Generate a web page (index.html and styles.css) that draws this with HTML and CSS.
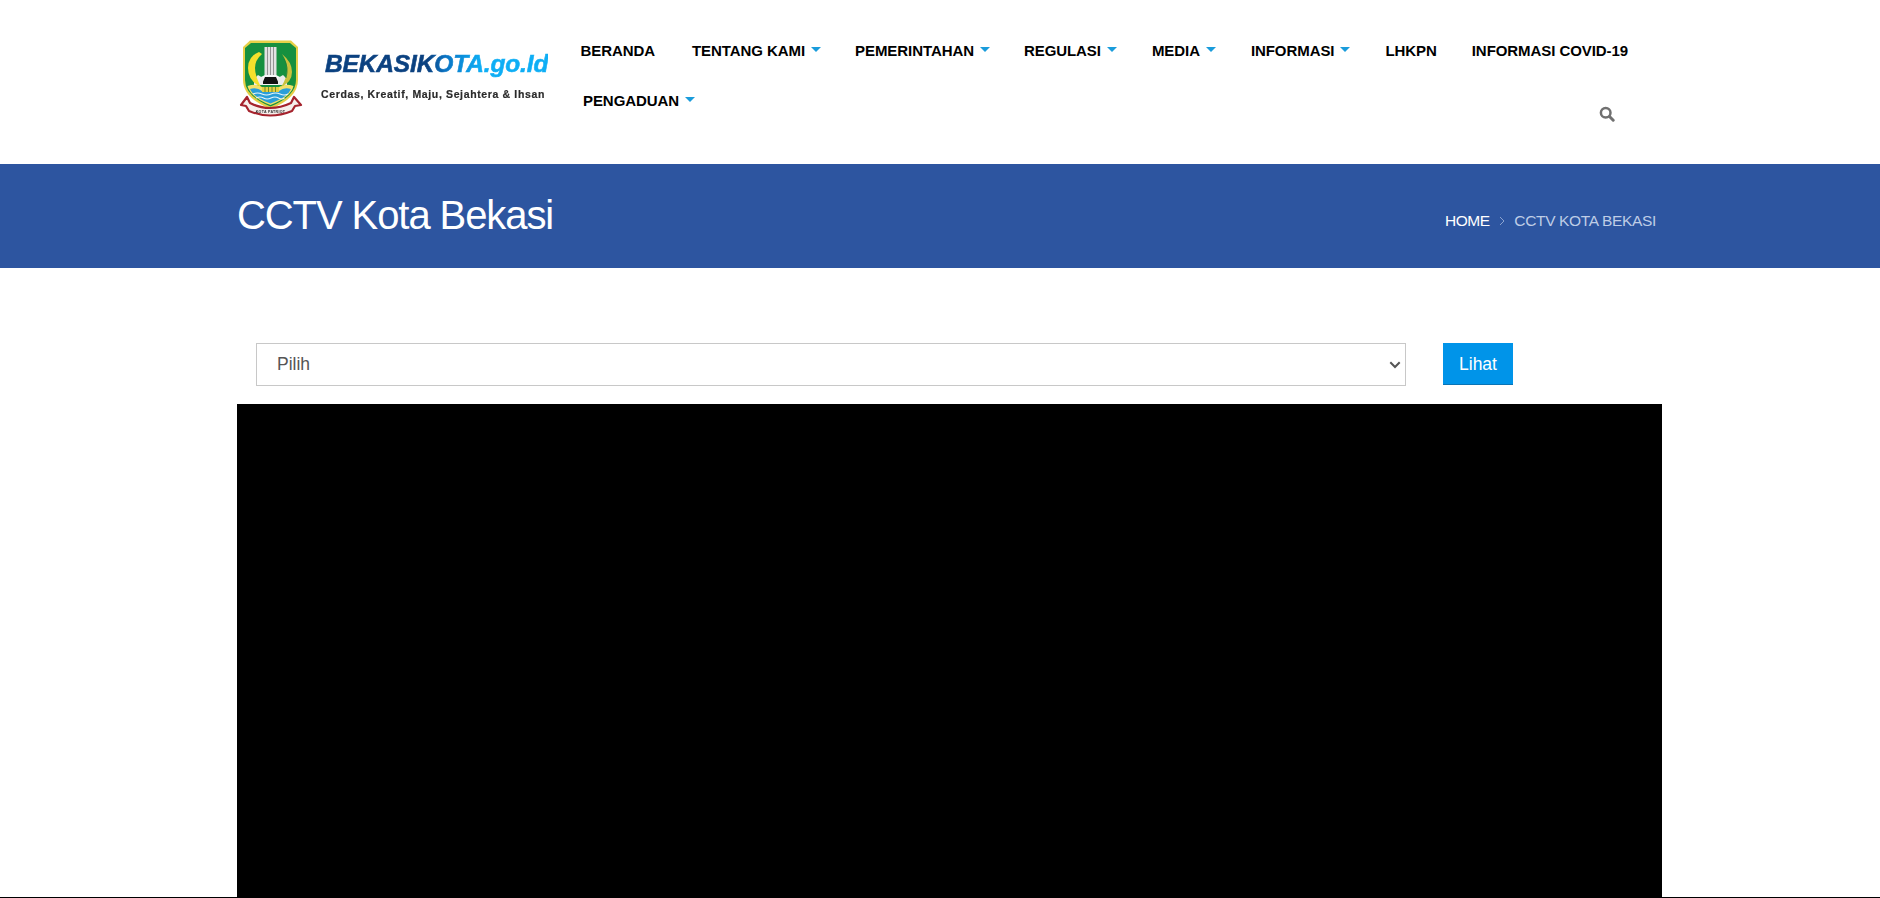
FILE: index.html
```html
<!DOCTYPE html>
<html lang="id">
<head>
<meta charset="utf-8">
<title>CCTV Kota Bekasi</title>
<link rel="stylesheet" href="styles.css">
</head>
<body>
<header class="site-header">
  <a class="logo" href="#">
    <svg class="emblem" viewBox="237 35 70 85" width="70" height="85" aria-hidden="true">
      <path d="M250 40.500H291L298 47V80Q298 98 270.500 109Q243 98 243 80V47Z" fill="#e6d048"/>
      <path d="M251 43H290L296 48V80Q296 96 270.500 106.500Q245 96 245 80V48Z" fill="#16903f"/>
      <path d="M247.500 86Q256 83 262 87H279Q285 83 293.500 86Q291 97 270.500 105Q250 97 247.500 86Z" fill="#f3e06a"/>
      <path d="M250 89Q257 87 262 91H279Q284 87 291 89Q288 97 270.500 103.500Q253 97 250 89Z" fill="#2a9ed8"/>
      <path d="M253 94q4.500-2 9 0t9 0t9 0t8 0M256 98q4-2 7.500 0t7.500 0t7.500 0t6 0" fill="none" stroke="#e8f6fb" stroke-width="1.100"/>
      <rect x="264.500" y="47" width="12" height="29" fill="#e2e2e2"/>
      <path d="M267.500 47V76M270.500 47V76M273.500 47V76" stroke="#939393" stroke-width="1"/>
      <path d="M257 79L265 75H276L284 79V85H257Z" fill="#f6f6f6"/>
      <path d="M262 84L265 77H276L279 84Z" fill="#111"/>
      <path d="M254 79L258 75L263 78V85H254Z" fill="#ececec"/>
      <path d="M287 79L283 75L278 78V85H287Z" fill="#ececec"/>
      <path d="M259 52Q248 56 248 68Q248 81 261 87Q255 76 255 68Q255 60 262 54Z" fill="#f5e02c"/>
      <path d="M282 54Q292 62 292 72Q292 82 281 87Q287 78 287 70Q287 61 282 54Z" fill="#c9c23d"/>
      <path d="M284 59Q289 67 286 78" fill="none" stroke="#1a7f3c" stroke-width=".8"/>
      <rect x="262" y="87" width="17" height="5" fill="#e5cf3f"/>
      <path d="M265 87V92M268.500 87V92M272 87V92M275.500 87V92" stroke="#4f7b2f" stroke-width=".8"/>
      <path d="M241 105L247 97L250 103Q270 113 291 103L294 97L301 105L295 106L292 111Q270 120 249 111L246 106Z" fill="#f6efec" stroke="#a5232d" stroke-width="2.200" stroke-linejoin="round"/>
      <text class="ribbon-text" x="270.500" y="112.500" text-anchor="middle">KOTA PATRIOT</text>
    </svg>
    <span class="logo-copy">
      <span class="logo-name">BEKASIKOTA.go.Id</span>
      <span class="logo-tag">Cerdas, Kreatif, Maju, Sejahtera &amp; Ihsan</span>
    </span>
  </a>
  <nav class="nav">
    <ul class="nav-row">
      <li class="item-home"><a href="#">BERANDA</a></li>
      <li class="item-tight"><a href="#" class="has-caret">TENTANG KAMI</a></li>
      <li class="item-tight"><a href="#" class="has-caret">PEMERINTAHAN</a></li>
      <li><a href="#" class="has-caret">REGULASI</a></li>
      <li><a href="#" class="has-caret">MEDIA</a></li>
      <li><a href="#" class="has-caret">INFORMASI</a></li>
      <li><a href="#">LHKPN</a></li>
      <li><a href="#">INFORMASI COVID-19</a></li>
    </ul>
    <ul class="nav-row nav-row-second">
      <li><a href="#" class="has-caret">PENGADUAN</a></li>
      <li class="search">
        <svg viewBox="0 0 16 16" width="16" height="16" aria-hidden="true">
          <circle cx="6.700" cy="6.700" r="4.800" fill="none" stroke="#707070" stroke-width="2.500"/>
          <path d="M10.500 10.500L14.200 14.200" stroke="#707070" stroke-width="3" stroke-linecap="round"/>
        </svg>
      </li>
    </ul>
  </nav>
</header>
<section class="banner">
  <div class="banner-inner">
    <h1 class="banner-title">CCTV Kota Bekasi</h1>
    <div class="crumbs">
      <a href="#">HOME</a>
      <svg class="crumb-sep" viewBox="0 0 6 10" width="6" height="10" aria-hidden="true"><path d="M1 1L5 5L1 9" fill="none" stroke="#8ba3cf" stroke-width="1"/></svg>
      <span class="crumb-current">CCTV KOTA BEKASI</span>
    </div>
  </div>
</section>
<main class="content">
  <form class="filter">
    <div class="select-wrap">
      <select class="filter-select"><option>Pilih</option></select>
      <svg class="select-chevron" viewBox="0 0 12 8" width="12" height="8" aria-hidden="true"><path d="M1.300 1.300L6 6L10.700 1.300" fill="none" stroke="#555" stroke-width="2"/></svg>
    </div>
    <button class="filter-button" type="button">Lihat</button>
  </form>
  <div class="video"></div>
</main>
<div class="bottom-line"></div>
</body>
</html>
```
FILE: styles.css
```css
* { box-sizing: border-box; }
html, body { margin: 0; padding: 0; height: 898px; overflow: hidden; background: #fff; }
body {
  display: flex;
  flex-direction: column;
  font-family: "Liberation Sans", Arial, sans-serif;
  color: #000;
}
a { color: inherit; text-decoration: none; }
ul { list-style: none; margin: 0; padding: 0; }

.site-header {
  flex: none;
  height: 164px;
  padding-left: 237px;
  display: flex;
  align-items: flex-start;
}
.logo { flex: none; width: 326px; height: 164px; padding-top: 35px; display: flex; filter: blur(.35px); }
.emblem { flex: none; display: block; }
.ribbon-text { font: bold 3.600px "Liberation Sans", sans-serif; fill: #333; letter-spacing: .3px; }
.logo-copy { display: flex; flex-direction: column; padding-left: 14px; }
.logo-name {
  margin-top: 14px;
  margin-left: 4px;
  font: italic bold 24.500px/30px "Liberation Sans", sans-serif;
  white-space: nowrap;
  letter-spacing: -.14px;
  color: transparent;
  background: linear-gradient(90deg, #0b4180 46%, #0a74c4 54%, #0eaef5 70%);
  -webkit-background-clip: text;
  background-clip: text;
  -webkit-text-stroke: .6px transparent;
}
.logo-tag {
  margin-top: 8px;
  font: bold 10.500px/14px "Liberation Sans", sans-serif;
  color: #2a2a2a;
  letter-spacing: .64px;
  white-space: nowrap;
  -webkit-text-stroke: .2px currentColor;
}

.nav { width: 1100px; padding-top: 26px; }
.nav-row { display: flex; height: 50px; align-items: center; }
.nav-row li { flex: none; padding: 0 17.500px; font-size: 15px; line-height: 50px; font-weight: bold; letter-spacing: -.07px; white-space: nowrap; }
.nav-row .item-home { padding-right: 19.500px; }
.nav-row .item-tight { padding-right: 16.500px; }
.nav-row-second { padding-left: 2.500px; }
.has-caret::after {
  content: "";
  display: inline-block;
  margin-left: 6px;
  vertical-align: 4px;
  border-top: 5px solid #1a9cdb;
  border-left: 5px solid transparent;
  border-right: 5px solid transparent;
}
.nav-row .search { margin-left: auto; padding: 0 48.500px 0 0; height: 16px; line-height: 0; margin-top: 26px; }

.banner { flex: none; height: 104px; background: #2d55a0; color: #fff; }
.banner-inner { margin-left: 237px; width: 1419px; height: 100%; display: flex; justify-content: space-between; align-items: center; }
.banner-title { margin: 0; font-size: 40px; line-height: 48px; font-weight: normal; letter-spacing: -1.080px; position: relative; top: -1px; }
.crumbs { display: flex; align-items: center; gap: 9.400px; padding-top: 9px; font-size: 15.500px; line-height: 20px; }
.crumbs a { letter-spacing: -.5px; }
.crumb-sep { flex: none; }
.crumb-current { color: #bfcde6; letter-spacing: -.33px; }

.content { flex: 1; min-height: 0; margin-left: 237px; width: 1425px; padding-top: 75px; display: flex; flex-direction: column; }
.filter { flex: none; height: 61px; padding-left: 19px; display: flex; align-items: flex-start; gap: 37px; }
.select-wrap { position: relative; flex: none; width: 1150px; height: 43px; }
.filter-select {
  display: block;
  width: 100%;
  height: 100%;
  padding: 0 0 2px 20px;
  border: 1px solid #c8c8c8;
  border-radius: 0;
  background: #fff;
  color: #555;
  font: 17.500px "Liberation Sans", sans-serif;
  appearance: none;
  -webkit-appearance: none;
}
.select-chevron { position: absolute; top: 18px; right: 5.500px; pointer-events: none; }
.filter-button {
  flex: none;
  width: 70px;
  height: 42px;
  padding: 2px 0 0;
  border: 0;
  border-bottom: 1px solid #0a74b5;
  background: #0094e9;
  color: #fff;
  font: 17.500px "Liberation Sans", sans-serif;
}
.video { flex: 1; background: #000; }
.bottom-line { flex: none; height: 1px; background: #000; }
```
